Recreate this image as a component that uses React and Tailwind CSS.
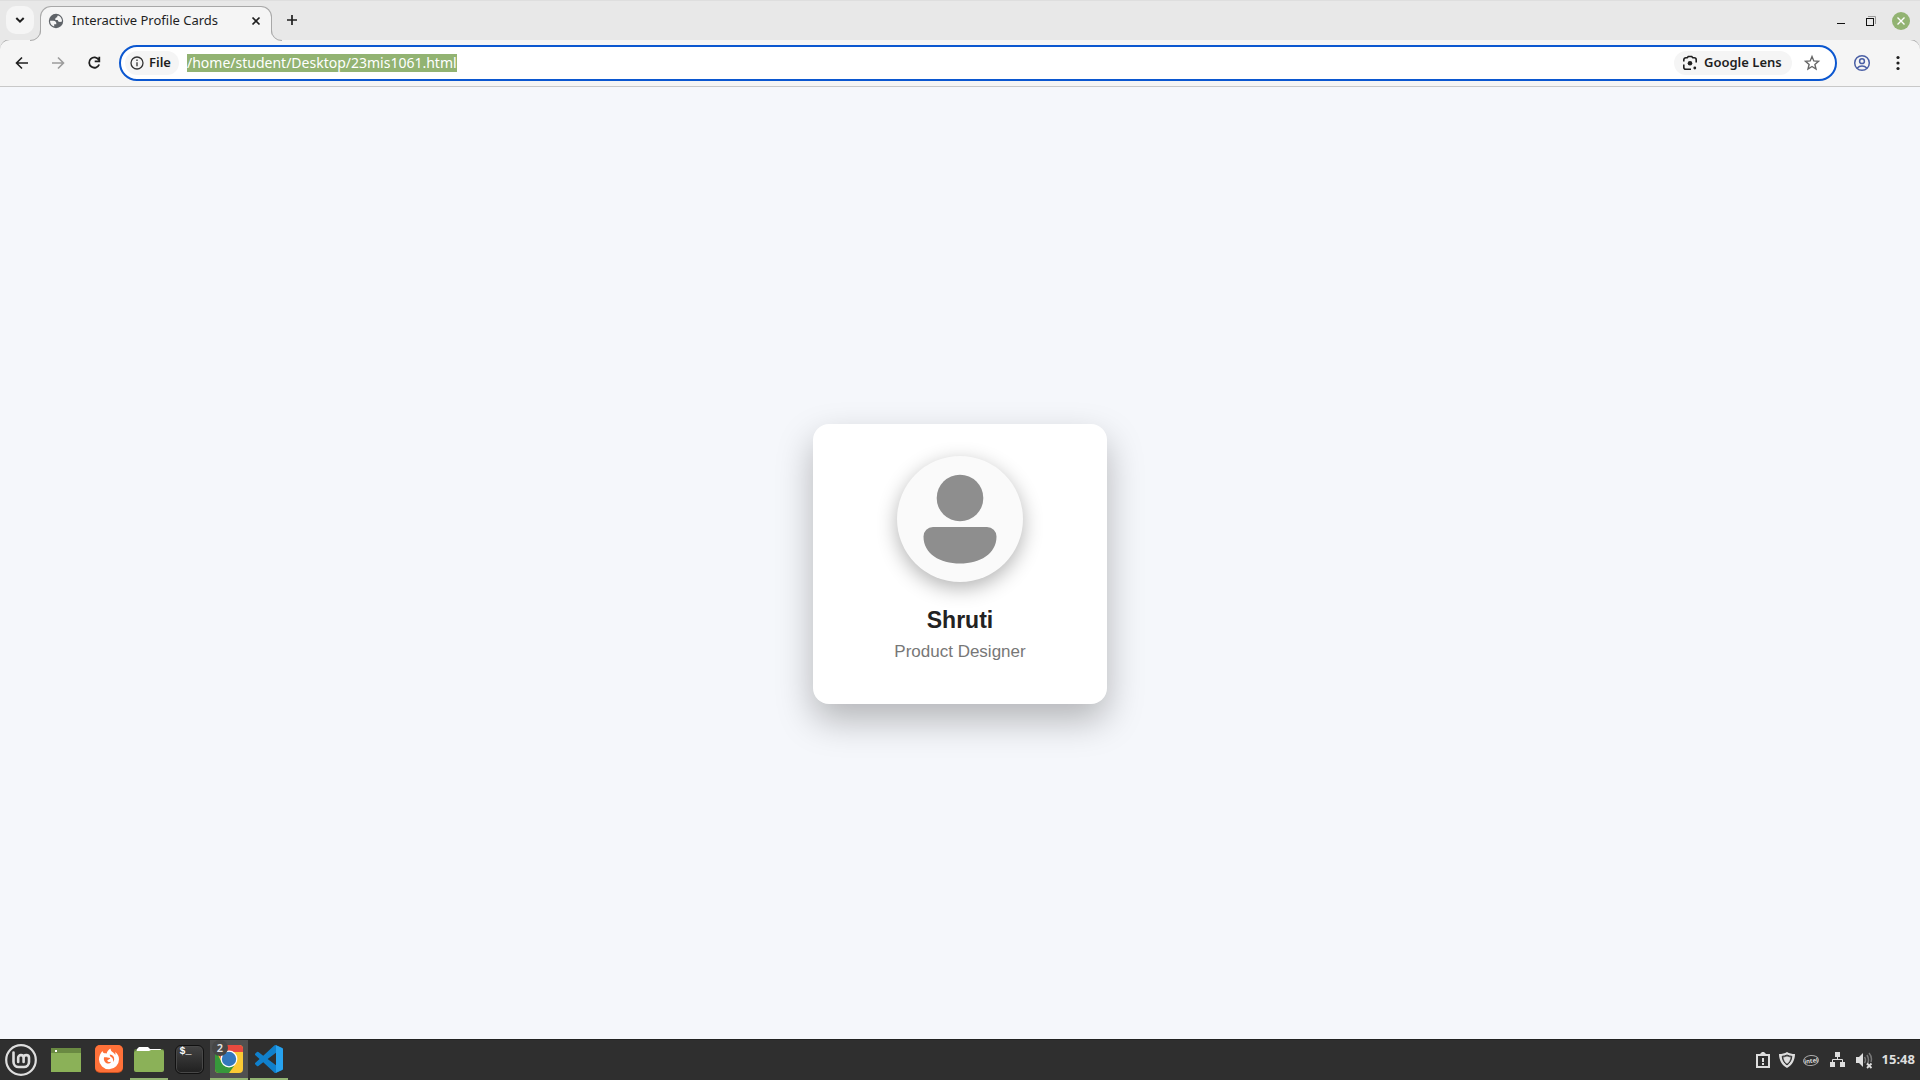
import React from "react";

function TabStrip() {
  return (
    <div className="relative flex h-10 items-end border-t border-[#dedede] bg-[#e8e8e8] text-[#1f1f1f]">
      <button aria-label="Search tabs" className="mb-[6px] ml-1.5 flex h-7 w-7 items-center justify-center rounded-[10px] bg-[#f5f5f5]">
        <svg viewBox="0 0 28 28" className="h-7 w-7" fill="none" stroke="#1f1f1f" strokeWidth="2">
          <path d="M10.300 12l3.700 3.700L17.700 12" />
        </svg>
      </button>
      <div className="relative z-10 -mb-px ml-1.5 flex h-[35px] w-[232px] items-center rounded-t-[11px] border border-b-0 border-[#a8a8a8] bg-[#f5f5f5] pr-[7px] pb-[7px] pl-[7px]">
        <svg viewBox="0 0 11 11" className="absolute bottom-0 -left-[11px] h-[11px] w-[11px]">
          <path d="M11 0 A10 10 0 0 1 0 10.500 V11 H11Z" fill="#f5f5f5" />
          <path d="M10.500 0 A10 10 0 0 1 0 10.500" fill="none" stroke="#a8a8a8" />
        </svg>
        <svg viewBox="0 0 11 11" className="absolute -right-[11px] bottom-0 h-[11px] w-[11px]">
          <path d="M0 0 A10 10 0 0 0 11 10.500 V11 H0Z" fill="#f5f5f5" />
          <path d="M.5 0 A10 10 0 0 0 11 10.500" fill="none" stroke="#a8a8a8" />
        </svg>
        <svg viewBox="0 0 16 16" className="h-4 w-4">
          <circle cx="8" cy="8" r="7.200" fill="#5f6368" />
          <path fill="#f5f5f5" d="M2 7.800h3.300c2.300.1 3.300 1.200 3 3.400H6.200v2.400C4 13 2 11 2 7.800zM13.900 8.500c-.4.300-1 .5-1.900.5-1.500 0-2.200-.7-2.200-1.900H7.300C7.100 5.300 7.800 4.300 9.200 4.300c0-.9.200-1.400.8-1.700 2.300.8 4 3 4 5.400z" />
        </svg>
        <span className="ml-2 flex-1 text-[13px] whitespace-nowrap">Interactive Profile Cards</span>
        <button aria-label="Close tab" className="flex h-4 w-4 items-center justify-center">
          <svg viewBox="0 0 16 16" className="h-4 w-4" stroke="#1f1f1f" strokeWidth="1.700"><path d="M4.500 4.500l7 7M11.500 4.500l-7 7" /></svg>
        </button>
      </div>
      <button aria-label="New tab" className="mb-[6px] ml-1.5 flex h-7 w-7 items-center justify-center">
        <svg viewBox="0 0 28 28" className="h-7 w-7" stroke="#1f1f1f" strokeWidth="1.700"><path d="M14 9v10M9 14h10" /></svg>
      </button>
      <div className="ml-auto flex h-full items-center pr-[10px]">
        <button aria-label="Minimise" className="flex h-6 w-[29px] items-center justify-center">
          <svg viewBox="0 0 12 12" className="h-3 w-3"><path d="M2 8.500h8" stroke="#111" /></svg>
        </button>
        <button aria-label="Restore" className="flex h-6 w-[31px] items-center justify-center">
          <svg viewBox="0 0 12 12" className="h-3 w-3" fill="none"><path d="M3 1.500h7.500V9" stroke="#999" /><rect x="1.500" y="3.500" width="7" height="7" stroke="#111" /></svg>
        </button>
        <button aria-label="Close" className="ml-1.5 flex h-[18px] w-[18px] items-center justify-center rounded-full bg-[#92b372]">
          <svg viewBox="0 0 18 18" className="h-[18px] w-[18px]" stroke="#fff" strokeWidth="1.400"><path d="M5.500 5.500l7 7M12.500 5.500l-7 7" /></svg>
        </button>
      </div>
    </div>
  );
}

function Toolbar() {
  return (
    <div className="bg-[#e8e8e8]">
      <div className="-mt-px flex h-12 items-center rounded-t-[10px] border border-x-0 border-t-[#a8a8a8] border-b-[#c8c8c8] bg-[#f5f5f5] pr-[14px] pl-2">
        <button aria-label="Back" className="flex h-7 w-7 items-center justify-center">
          <svg viewBox="0 0 16 16" className="h-4 w-4" fill="none" stroke="#1f1f1f" strokeWidth="1.600"><path d="M14 8H3M8 2.500L2.500 8 8 13.500" /></svg>
        </button>
        <button aria-label="Forward" className="ml-2 flex h-7 w-7 items-center justify-center">
          <svg viewBox="0 0 16 16" className="h-4 w-4" fill="none" stroke="#9c9c9c" strokeWidth="1.600"><path d="M2 8h11M8 2.500L13.500 8 8 13.500" /></svg>
        </button>
        <button aria-label="Reload" className="ml-2 flex h-7 w-7 items-center justify-center">
          <svg viewBox="0 0 16 16" className="h-4 w-4" fill="none" stroke="#1f1f1f" strokeWidth="1.800"><path d="M12.800 4.800A5.200 5.200 0 1 0 13.200 9.500M13.300 1.800v4.600H8.700" /></svg>
        </button>
        <div className="ml-[11px] flex h-9 flex-1 items-center rounded-full border-2 border-[#0b57d0] bg-white pr-[15px] pl-1">
          <button className="flex h-6 w-[54px] items-center rounded-full bg-[#f5f5f5] pl-[5px] text-[13px] font-semibold text-[#1f1f1f]">
            <svg viewBox="0 0 14 14" className="mr-[5px] h-[14px] w-[14px] shrink-0" fill="none" stroke="#333"><circle cx="7" cy="7" r="6" strokeWidth="1.300" /><path d="M7 6.300v4M7 3.500v1.500" strokeWidth="1.300" /></svg>
            File
          </button>
          <input aria-label="Address" readOnly value="/home/student/Desktop/23mis1061.html" className="ml-2 h-[18px] field-sizing-content bg-[#92b372] text-[14px] leading-[18px] text-white outline-none" />
          <button className="ml-auto flex h-6 w-[118px] items-center rounded-full bg-[#f5f5f5] pl-2 text-[13px] font-semibold whitespace-nowrap text-[#1f1f1f]">
            <svg viewBox="0 0 16 16" className="mr-1.5 h-4 w-4 shrink-0" fill="none" stroke="#1f1f1f" strokeWidth="1.600">
              <path d="M1.800 6.500V4.800a2 2 0 0 1 2-2h1.400L6.300 1.500h3.400l1.100 1.300h1.400a2 2 0 0 1 2 2v2.700M1.800 9.500v2.700a2 2 0 0 0 2 2H9" />
              <circle cx="8" cy="8.300" r="2.300" fill="#1f1f1f" stroke="none" /><circle cx="12.800" cy="13" r="1.400" fill="#1f1f1f" stroke="none" />
            </svg>
            Google Lens
          </button>
          <button aria-label="Bookmark this page" className="ml-3 flex h-4 w-4 items-center justify-center">
            <svg viewBox="0 0 16 16" className="h-4 w-4 overflow-visible" fill="none" stroke="#666" strokeWidth="1.400"><path d="M8 1.500l1.800 4.400 4.700.4-3.600 3.100 1.100 4.600-4-2.500L4 14l1.100-4.600L1.500 6.300l4.700-.4z" /></svg>
          </button>
        </div>
        <button aria-label="Profile" className="ml-4 flex h-[18px] w-[18px] items-center justify-center">
          <svg viewBox="0 0 18 18" className="h-[18px] w-[18px]" fill="none" stroke="#4a5fa5" strokeWidth="1.500"><circle cx="9" cy="9" r="7.300" /><circle cx="9" cy="7.200" r="2.400" /><path d="M4 14.200c2.800-2.800 7.200-2.800 10 0" /></svg>
        </button>
        <button aria-label="Menu" className="ml-[19px] flex h-4 w-4 items-center justify-center">
          <svg viewBox="0 0 16 16" className="h-4 w-4" fill="#1f1f1f"><circle cx="8" cy="2.500" r="1.600" /><circle cx="8" cy="8" r="1.600" /><circle cx="8" cy="13.500" r="1.600" /></svg>
        </button>
      </div>
    </div>
  );
}

function ProfileCard() {
  return (
    <article className="flex w-[294px] flex-col items-center rounded-2xl bg-white px-5 pt-8 pb-[42px] font-['Liberation_Sans',sans-serif] shadow-[0_16px_36px_rgba(0,0,0,0.27)]">
      <div className="h-[126px] w-[126px] rounded-full bg-[#fafafa] shadow-[0_6px_20px_rgba(0,0,0,0.3)]">
        <svg viewBox="0 0 126 126" className="h-full w-full" fill="#8e8e8e">
          <circle cx="63" cy="42" r="23.300" />
          <path d="M36 71h54a9.500 9.500 0 0 1 9.500 9.500C99.500 98 83 107.500 63 107.500S26.500 98 26.500 80.500A9.500 9.500 0 0 1 36 71z" />
        </svg>
      </div>
      <h2 className="mt-6 text-[23px] leading-7 font-bold text-[#222]">Shruti</h2>
      <p className="mt-2 text-[17px] leading-5 text-[#777]">Product Designer</p>
    </article>
  );
}

function TaskButton({ label, open, active, children }) {
  return (
    <button
      aria-label={label}
      className={
        "relative flex h-full w-[38px] items-center justify-center border-y-2 border-t-transparent " +
        (open ? "border-b-[#92b372] " : "border-b-transparent ") +
        (active ? "bg-[#505050]" : "")
      }
    >
      {children}
    </button>
  );
}

function Taskbar() {
  return (
    <footer className="flex h-[41px] shrink-0 items-center justify-between border-t border-[#222] bg-[#2f2f2f]">
      <div className="flex h-full items-center gap-0.5">
        <button aria-label="Menu" className="mr-[3px] flex h-full w-[42px] items-center justify-center">
          <svg viewBox="0 0 32 32" className="h-8 w-8" fill="none" stroke="#dedede" strokeLinecap="round">
            <circle cx="16" cy="16" r="14.800" strokeWidth="2.200" />
            <path d="M8.500 8.500v9.500a5 5 0 0 0 5 5H19a5 5 0 0 0 5-5v-4.200a2.700 2.700 0 0 0-5.400 0V18M18.600 18v-4.200a2.700 2.700 0 0 0-5.400 0V18" strokeWidth="2.600" />
          </svg>
        </button>
        <div className="mr-[3px] h-full">
          <TaskButton label="Show desktop">
            <svg viewBox="0 0 30 24" className="h-6 w-[30px]"><path fill="#8bb158" d="M0 0h30v24H0z" /><path fill="#6a8a42" d="M0 0h30v5H0z" /><path fill="#fff" d="M4 2h2v2H4z" /></svg>
          </TaskButton>
        </div>
        <TaskButton label="Firefox">
          <svg viewBox="0 0 28 28" className="mb-0.5 h-7 w-7">
            <rect width="28" height="28" rx="5" fill="#c9501f" /><rect width="28" height="27" rx="5" fill="#ff7139" />
            <path fill="#fff" d="M7.500 6c.2 1.200.8 1.900 2 2.300.8 0 1.500 0 2.200.3C12 6.500 13.500 4.600 15.500 3.500c0 2 1.200 3 2.700 4.100 1 .8 1.600 1.400 2.100 2.400.3-1 .2-1.900-.2-2.900 2.700 1.800 3.900 4.300 3.900 7.100A10 10 0 0 1 4 14.500C4 11 5.500 8 7.500 6z" />
            <path fill="#ff7139" d="M9 12.300c1.800-.5 3.200.2 6.300.7-.3 1.200-1.700 1.500-2.600 2-.5.400-.3 1.100.2 1.500 1.200.8 2.300.6 3.300 0-.6 1.700-2.400 2.500-4.200 1.900-2.300-.8-3.700-3.200-3-6.100z" />
            <path fill="#ff7139" d="M14.800 9.500c2.900.2 4.600 2.200 4.400 5-.1 1-.5 1.800-1 2.400.2-2.500-.6-4.200-2.100-4.900-.9-.5-1.400-1.300-1.300-2.500z" />
          </svg>
        </TaskButton>
        <TaskButton label="Files" open>
          <svg viewBox="0 0 30 26" className="mb-0.5 h-[26px] w-[30px]"><path fill="#5f7c3c" d="M0 5a2 2 0 0 1 2-2h26a2 2 0 0 1 2 2v8H0z" /><path fill="#fff" d="M3 3l2-2h9l2 2h10a1 1 0 0 1 1 1v3H2z" /><path fill="#8bb158" d="M0 7a2 2 0 0 1 2-2h13l2-1h11a2 2 0 0 1 2 2v18a2 2 0 0 1-2 2H2a2 2 0 0 1-2-2z" /></svg>
        </TaskButton>
        <TaskButton label="Terminal">
          <span className="mb-0.5 flex h-[29px] w-[29px] items-start rounded-md border border-[#111] bg-linear-to-b from-[#444] to-[#202020] pl-1 font-['Liberation_Mono',monospace] text-[10px] leading-3 font-bold text-white shadow-[inset_0_0_0_1px_#484848]">$_</span>
        </TaskButton>
        <TaskButton label="Chrome" open active>
          <svg viewBox="0 0 28 28" className="mb-0.5 h-7 w-7">
            <clipPath id="chrome-tile"><rect width="28" height="28" rx="4" /></clipPath>
            <g clipPath="url(#chrome-tile)">
              <path fill="#fbc934" d="M0 0h28v28H0z" />
              <path fill="#37983b" d="M0 4l7 14 12 3-5 7H0z" />
              <path fill="#e84a3f" d="M0 0h28v7H14L7 15 1 6z" />
              <circle cx="14" cy="14" r="8.400" fill="#fff" /><circle cx="14" cy="14" r="7.200" fill="#3478bd" />
            </g>
          </svg>
          <span className="absolute -top-0.5 left-0.5 flex h-4 w-4 items-center justify-center rounded-full bg-[#474747] text-[11px] font-semibold text-[#e4e4e4]">2</span>
        </TaskButton>
        <TaskButton label="Visual Studio Code" open>
          <svg viewBox="0 0 100 100" className="mb-0.5 h-7 w-7">
            <path fill="#1080cc" fillRule="evenodd" d="M96.500 10.800L75.900.9a6.200 6.200 0 0 0-7.100 1.200L29.400 38 12.200 25a4.200 4.200 0 0 0-5.300.2L1.400 30.200a4.200 4.200 0 0 0 0 6.200L16.300 50 1.400 63.600a4.200 4.200 0 0 0 0 6.200l5.500 5a4.200 4.200 0 0 0 5.300.2l17.200-13L68.800 97.900a6.200 6.200 0 0 0 7.100 1.200l20.600-9.900A6.200 6.200 0 0 0 100 83.600V16.400a6.200 6.200 0 0 0-3.500-5.600zM75 72.700L45.100 50 75 27.300z" />
            <path fill="#27a2ef" d="M75 1l21.500 9.800a6.200 6.200 0 0 1 3.500 5.600v67.200a6.200 6.200 0 0 1-3.500 5.600L75 99z" />
          </svg>
        </TaskButton>
      </div>
      <div className="flex h-full items-center pr-[5px] text-[#dedede]">
        <svg viewBox="0 0 16 16" className="h-4 w-4"><path d="M2 3h12v12H2z" fill="none" stroke="currentColor" strokeWidth="2" /><path fill="currentColor" d="M5 2l2-2h2l2 2v2H5zM7 6h2v4H7zM7 11h2v2H7z" /></svg>
        <svg viewBox="0 0 16 16" className="ml-2 h-4 w-4"><path fill="currentColor" d="M8 0c2.300 1.400 5 2 8 2 0 6-2.700 11.300-8 14C2.700 13.300 0 8 0 2c3 0 5.700-.6 8-2z" /><path fill="#666" stroke="#2f2f2f" d="M8 3c1.400.8 3 1.200 4.800 1.300-.3 3.700-1.800 6.700-4.800 8.700-3-2-4.500-5-4.800-8.700C5 4.200 6.600 3.800 8 3z" /><path fill="currentColor" d="M8 4.500c1 .5 2.200.8 3.500.9-.3 2.600-1.400 4.600-3.500 6.200-2.100-1.600-3.200-3.600-3.500-6.200 1.300-.1 2.500-.4 3.500-.9z" /></svg>
        <span className="ml-2 flex h-[11px] w-4 -rotate-6 items-center justify-center rounded-[50%] border border-[#aaa] text-[6px] leading-none font-bold">intel</span>
        <svg viewBox="0 0 16 16" className="ml-[11px] h-4 w-4"><path fill="currentColor" d="M5 0h5v5H5zM0 10h5v5H0zM10 10h5v5h-5z" /><path fill="none" stroke="currentColor" d="M7.500 5v3M2.500 10V7.500h10V10" /></svg>
        <svg viewBox="0 0 18 18" className="ml-[9px] h-[18px] w-[18px]"><path fill="currentColor" d="M1 6h3l4-4v14l-4-4H1z" /><path fill="none" stroke="#777" strokeWidth="1.500" d="M9.500 6q2 3 0 6M12 4q3 5 0 10M14 2q3.500 4 2 9" /><path stroke="currentColor" strokeWidth="1.800" d="M12 12.500l4.500 4.500M16.500 12.500L12 17" /></svg>
        <time className="ml-[9px] font-['Noto_Sans',sans-serif] text-[13px] font-bold">15:48</time>
      </div>
    </footer>
  );
}

export default function App() {
  return (
    <div className="flex min-h-screen flex-col bg-[#f5f7fb] font-['Noto_Sans',sans-serif]">
      <header className="shrink-0">
        <TabStrip />
        <Toolbar />
      </header>
      <main className="flex flex-1 items-center justify-center pt-0.5">
        <ProfileCard />
      </main>
      <Taskbar />
    </div>
  );
}
